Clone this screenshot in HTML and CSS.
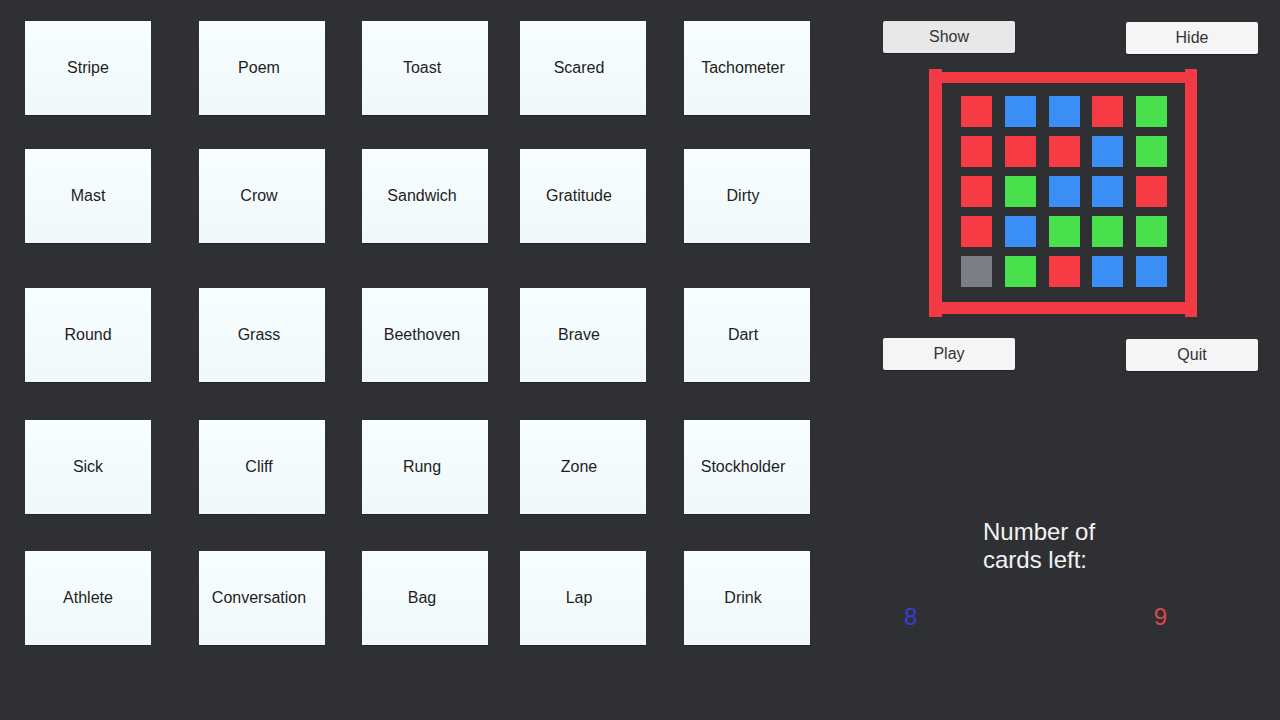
FILE: index.html
```html
<!DOCTYPE html>
<html lang="en">
<head>
  <meta charset="UTF-8">
  <meta name="viewport" content="width=device-width, initial-scale=1.0">
  <title>Codenames</title>
  <link rel="stylesheet" href="styles.css">
</head>
<body>
  <div class="game">

    <!-- word cards -->
    <div class="word-grid">
      <div class="card">Stripe</div>
      <div class="card">Poem</div>
      <div class="card">Toast</div>
      <div class="card">Scared</div>
      <div class="card">Tachometer</div>

      <div class="card">Mast</div>
      <div class="card">Crow</div>
      <div class="card">Sandwich</div>
      <div class="card">Gratitude</div>
      <div class="card">Dirty</div>

      <div class="card">Round</div>
      <div class="card">Grass</div>
      <div class="card">Beethoven</div>
      <div class="card">Brave</div>
      <div class="card">Dart</div>

      <div class="card">Sick</div>
      <div class="card">Cliff</div>
      <div class="card">Rung</div>
      <div class="card">Zone</div>
      <div class="card">Stockholder</div>

      <div class="card">Athlete</div>
      <div class="card">Conversation</div>
      <div class="card">Bag</div>
      <div class="card">Lap</div>
      <div class="card">Drink</div>
    </div>

    <!-- key card and controls -->
    <div class="side-panel">
      <div class="button-row">
        <button class="btn btn-pressed">Show</button>
        <button class="btn btn-low">Hide</button>
      </div>

      <div class="key-frame">
        <div class="key-inner">
          <div class="key-grid">
            <span class="sq red"></span><span class="sq blue"></span><span class="sq blue"></span><span class="sq red"></span><span class="sq green"></span>
            <span class="sq red"></span><span class="sq red"></span><span class="sq red"></span><span class="sq blue"></span><span class="sq green"></span>
            <span class="sq red"></span><span class="sq green"></span><span class="sq blue"></span><span class="sq blue"></span><span class="sq red"></span>
            <span class="sq red"></span><span class="sq blue"></span><span class="sq green"></span><span class="sq green"></span><span class="sq green"></span>
            <span class="sq grey"></span><span class="sq green"></span><span class="sq red"></span><span class="sq blue"></span><span class="sq blue"></span>
          </div>
        </div>
      </div>

      <div class="button-row play-row">
        <button class="btn">Play</button>
        <button class="btn btn-low">Quit</button>
      </div>

      <div class="cards-left">Number of cards left:</div>

      <div class="score-row">
        <span class="score blue-team">8</span>
        <span class="score red-team">9</span>
      </div>
    </div>

  </div>
</body>
</html>
```

FILE: styles.css
```css
body {
  margin: 0;
  background-color: #2f3033;
  font-family: "Liberation Sans", Arial, sans-serif;
  width: 1280px;
  height: 720px;
  overflow: hidden;
}

.game {
  display: flex;
}

/* The cards are not evenly spaced in the original, so the tracks carry the gaps */
.word-grid {
  display: grid;
  grid-template-columns: 174px 163px 158px 164px 126px;
  grid-template-rows: 128px 139px 132px 131px 94px;
  padding: 21px 0 0 25px;
}

.card {
  width: 126px;
  height: 94px;
  display: flex;
  align-items: center;
  justify-content: center;
  box-sizing: border-box;
  background: linear-gradient(#f7feff, #f1f8fa);
  box-shadow: 0 1px 0 rgba(0, 0, 0, 0.25);
  color: #1e1e1e;
  font-size: 16px;
}

/* labels sit a little left of centre in every column but the first */
.card:nth-child(5n+2),
.card:nth-child(5n+3) {
  padding-right: 6px;
}

.card:nth-child(5n+4),
.card:nth-child(5n) {
  padding-right: 8px;
}

.side-panel {
  width: 375px;
  margin-left: 73px;
  padding-top: 21px;
}

.button-row {
  display: flex;
  justify-content: space-between;
  align-items: flex-start;
}

.btn {
  width: 132px;
  height: 32px;
  border: none;
  border-radius: 2px;
  background-color: #f5f5f5;
  box-shadow: 0 1px 1px rgba(0, 0, 0, 0.3);
  color: #333;
  font-family: "Liberation Sans", Arial, sans-serif;
  font-size: 16px;
  padding: 0;
}

.btn-pressed {
  background-color: #e8e8e8;
}

.btn-low {
  margin-top: 1px;
}

/* red key frame: posts left/right, bars top/bottom */
.key-frame {
  width: 268px;
  height: 248px;
  margin: 15px 0 0 46px;
  box-sizing: border-box;
  border-left: 13px solid #f23a45;
  border-right: 12px solid #f23a45;
  padding: 3px 0;
}

.key-inner {
  height: 242px;
  box-sizing: border-box;
  border-top: 11px solid #f23a45;
  border-bottom: 12px solid #f23a45;
  padding: 13px 18px 0 19px;
}

.key-grid {
  display: grid;
  grid-template-columns: repeat(5, 31px);
  grid-auto-rows: 31px;
  column-gap: 12.75px;
  row-gap: 9px;
}

.sq.red { background-color: #f63b44; }
.sq.blue { background-color: #3a8ef6; }
.sq.green { background-color: #48e04d; }
.sq.grey { background-color: #7b7e85; }

.play-row {
  margin-top: 21px;
}

.cards-left {
  width: 125px;
  margin: 147px 0 0 100px;
  color: #f2f2f2;
  font-size: 24px;
  line-height: 28px;
}

.score-row {
  display: flex;
  justify-content: space-between;
  width: 263px;
  margin: 29px 0 0 21px;
  font-size: 24px;
  line-height: 28px;
}

.blue-team { color: #3a3dcf; }
.red-team { color: #d44a4a; }
```
